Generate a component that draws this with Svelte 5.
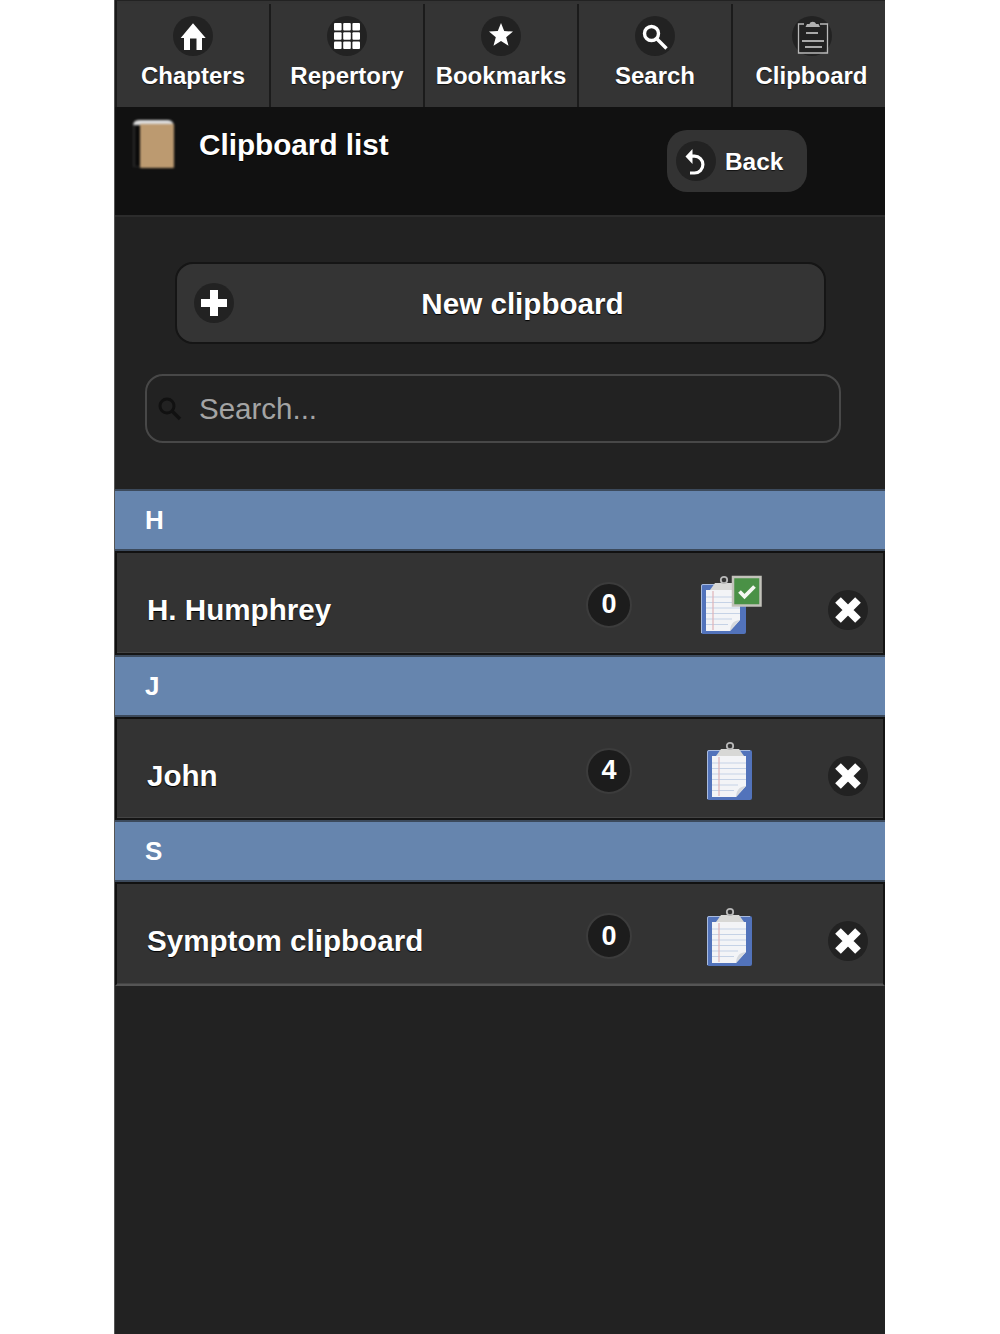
<script>
	const tabs = [
		{ label: "Chapters", icon: "home" },
		{ label: "Repertory", icon: "grid" },
		{ label: "Bookmarks", icon: "star" },
		{ label: "Search", icon: "search" },
		{ label: "Clipboard", icon: "clip" }
	];

	const groups = [
		{ letter: "H", name: "H. Humphrey", count: 0, checked: true },
		{ letter: "J", name: "John", count: 4, checked: false },
		{ letter: "S", name: "Symptom clipboard", count: 0, checked: false }
	];
</script>

{#snippet clipboard(checked)}
	<svg class="sheet" class:checked viewBox="0 0 60 60" width="60" height="60">
		<rect x="8" y="9" width="45" height="50" rx="2" fill="#5273bb" />
		<path d="M8.500 58V11q0-1.500 1.500-1.500h41" fill="none" stroke="#a9bbdd" stroke-width="1" />
		<path d="M13 15h34v30l-10 11H13z" fill="#f3f4f7" />
		<path d="M13 22h34M13 27.500h34M13 33h34M13 38.500h34M13 44h26M13 49.500h22" stroke="#c5d2e6" stroke-width="1" />
		<path d="M20 16v39" stroke="#dfb2b8" stroke-width="1.200" />
		<path d="M37 56c.5-6 2-10 10-11z" fill="#d6d9de" />
		<path d="M17 15l5-7h18l5 7z" fill="#d8d8d6" />
		<circle cx="31" cy="5" r="3.200" fill="none" stroke="#b8b8b8" stroke-width="1.800" />
		{#if checked}
			<rect x="40" y="2" width="27.500" height="28.500" fill="#4a9146" stroke="#c2c2ba" stroke-width="2.500" />
			<path d="M46.500 16.500l5 5 10-10" fill="none" stroke="#f4f8f2" stroke-width="3.800" />
		{/if}
	</svg>
{/snippet}

<div class="page">
	<nav class="tabs">
		{#each tabs as tab}
			<div class="tab">
				<span class="disc">
					<svg viewBox="0 0 40 40" width="40" height="40">
						{#if tab.icon == "home"}
							<path d="M20 7.300 7.700 22H11V34h6V22.500h6.500V34H29V22h3.700z" fill="#fff" />
						{:else if tab.icon == "grid"}
							{#each [7, 16.200, 25.400] as y}
								{#each [7, 16.200, 25.400] as x}
									<rect {x} {y} width="7.600" height="7.600" rx="1" fill="#fff" />
								{/each}
							{/each}
						{:else if tab.icon == "star"}
							<path d="M20 7l3.200 8 8.800.6-6.800 5.600 2.300 8.500-7.500-4.700-7.500 4.700 2.300-8.500-6.800-5.600 8.800-.6z" fill="#fff" />
						{:else if tab.icon == "search"}
							<circle cx="16.500" cy="17.500" r="7" fill="none" stroke="#fff" stroke-width="3.400" />
							<path d="M22 23l9.500 9.500" stroke="#fff" stroke-width="3.400" />
						{:else}
							<path d="M12 8H6.500v29h29V8H28" fill="none" stroke="#b8b8b8" stroke-width="1.300" />
							<path d="M13.500 11l1.500-3h2.500c.8-3 5.700-3 6.500 0h2.500l1.500 3z" fill="#b0b0b0" />
							<path d="M14 17h12M10 25h22M13 31h17" stroke="#a8a8a8" stroke-width="2" />
						{/if}
					</svg>
				</span>
				<span class="tab-label">{tab.label}</span>
			</div>
		{/each}
	</nav>

	<header class="head">
		<svg class="book" viewBox="0 0 46 52" width="46" height="52">
			<path d="M3 8q0-6 6-6h29q5 0 6 6v4H3z" fill="#dcdcdc" />
			<rect x="3" y="7" width="7" height="42" fill="#2a2a2a" />
			<rect x="5" y="8" width="5" height="40" fill="#0a0a0a" />
			<rect x="10" y="6" width="34" height="44" rx="1" fill="#bc9a70" />
		</svg>
		<h1>Clipboard list</h1>
		<button class="back">
			<span class="disc">
				<svg viewBox="0 0 40 40" width="40" height="40">
					<path d="M15 15.200h3.500a8.400 8.400 0 0 1 0 16.800H14" fill="none" stroke="#fff" stroke-width="3.200" />
					<path d="M9.500 15.500 16.500 8v15z" fill="#fff" />
				</svg>
			</span>
			Back
		</button>
	</header>

	<main class="tools">
		<button class="new">
			<span class="disc">
				<svg viewBox="0 0 40 40" width="40" height="40">
					<path d="M20 7v26M7 20h26" stroke="#fff" stroke-width="8" />
				</svg>
			</span>
			New clipboard
		</button>
		<div class="search">
			<svg viewBox="0 0 26 26" width="26" height="26">
				<circle cx="11" cy="10" r="7" fill="none" stroke="#111" stroke-width="3" />
				<path d="M16 15l8 8" stroke="#111" stroke-width="3.400" />
			</svg>
			<input placeholder="Search..." />
		</div>
	</main>

	{#each groups as group}
		<div class="letter">{group.letter}</div>
		<div class="row">
			<span class="name">{group.name}</span>
			<span class="count">{group.count}</span>
			<span class="pic">{@render clipboard(group.checked)}</span>
			<span class="disc close">
				<svg viewBox="0 0 40 40" width="40" height="40">
					<path d="M10 10l20 20M30 10 10 30" stroke="#fff" stroke-width="8" />
				</svg>
			</span>
		</div>
	{/each}
</div>

<style>
	:global(body) {
		background: #fff;
		font-family: "Liberation Sans", Arial, sans-serif;
	}

	.page {
		box-sizing: border-box;
		width: 771px;
		height: 1334px;
		margin-left: 114px;
		background: #222;
		border-left: 1px solid #555;
		overflow: hidden;
	}

	.tabs {
		display: flex;
		height: 107px;
		box-sizing: border-box;
		padding-top: 3px;
		background: #333;
		border-top: 1px solid #222;
		border-left: 2px solid #1b1b1b;
	}

	.tab {
		flex: 0 0 154px;
		display: flex;
		flex-direction: column;
		align-items: center;
		box-sizing: border-box;
		padding-top: 12px;
		border-right: 2px solid #1b1b1b;
		background: #343434;
	}

	.tab:last-child {
		flex: 1;
		padding-left: 5px;
		border-right: 0;
	}

	.tab-label {
		margin-top: 5px;
		color: #fff;
		font-size: 24px;
		font-weight: bold;
		line-height: 30px;
		white-space: nowrap;
		text-shadow: 0 1px 1px #111;
	}

	.disc {
		display: block;
		flex: none;
		width: 40px;
		height: 40px;
		border-radius: 50%;
		background: #222;
	}

	.disc svg {
		display: block;
	}

	.head {
		position: relative;
		display: flex;
		height: 110px;
		box-sizing: border-box;
		background: #111;
		border-bottom: 2px solid #2c2c2c;
	}

	.book {
		flex: none;
		margin: 11px 0 0 15px;
		filter: blur(0.8px);
	}

	h1 {
		margin: 20px 0 0 23px;
		color: #fff;
		font-size: 29.700px;
		font-weight: bold;
		line-height: 36px;
		text-shadow: 0 1px 1px #000;
	}

	button {
		font-family: inherit;
		font-weight: bold;
		color: #fff;
		cursor: pointer;
	}

	.back {
		display: flex;
		align-items: center;
		gap: 9px;
		position: absolute;
		left: 552px;
		top: 23px;
		box-sizing: border-box;
		width: 140px;
		height: 62px;
		padding: 2px 0 0 9px;
		border: 0;
		border-radius: 20px;
		background: #333;
		font-size: 24.400px;
		text-shadow: 0 1px 1px #111;
	}

	.back .disc {
		margin-top: -2px;
	}

	.tools {
		display: flex;
		flex-direction: column;
		height: 272px;
		box-sizing: border-box;
		padding: 45px 0 0 30px;
	}

	.new {
		position: relative;
		box-sizing: border-box;
		width: 651px;
		height: 82px;
		margin-left: 30px;
		padding: 2px 0 0 44px;
		border: 2px solid #151515;
		border-radius: 18px;
		background: #343434;
		font-size: 29.600px;
		text-shadow: 0 1px 1px #000;
	}

	.new .disc {
		position: absolute;
		left: 17px;
		top: 19px;
	}

	.search {
		display: flex;
		align-items: center;
		box-sizing: border-box;
		width: 696px;
		height: 69px;
		margin-top: 30px;
		padding-left: 9px;
		border: 2px solid #484848;
		border-radius: 18px;
		background: #222;
	}

	.search input {
		flex: 1;
		min-width: 0;
		margin-left: 17px;
		padding: 0;
		border: 0;
		outline: 0;
		background: transparent;
		color: #aaa;
		font-family: inherit;
		font-size: 29.500px;
	}

	.search input::placeholder {
		color: #a4a4a4;
		opacity: 1;
	}

	.letter {
		box-sizing: border-box;
		height: 62px;
		padding: 14px 0 0 30px;
		background: #6685ae;
		border-top: 2px solid #3c4a5c;
		border-bottom: 2px solid #3c4a5c;
		color: #fff;
		font-size: 26px;
		font-weight: bold;
		line-height: 30px;
	}

	.row {
		display: flex;
		align-items: center;
		box-sizing: border-box;
		height: 103.700px;
		padding: 14px 0 0 30px;
		background: #333;
		border: 2px solid #111;
		border-bottom-color: #151515;
		border-right-color: #151515;
		box-shadow: inset 0 -1px 0 #444;
	}

	.row:last-child {
		border-bottom-color: #555;
	}

	.name {
		flex: 1;
		color: #fff;
		font-size: 29.600px;
		font-weight: bold;
		text-shadow: 0 1px 1px #000;
	}

	.count {
		display: flex;
		align-items: center;
		justify-content: center;
		box-sizing: border-box;
		width: 46px;
		height: 46px;
		margin: -10px 0 0 0;
		border: 2px solid #3c3c3c;
		border-radius: 50%;
		background: #1c1c1c;
		color: #fff;
		font-size: 27px;
		font-weight: bold;
	}

	.pic {
		width: 60px;
		height: 60px;
		margin: -9px 69px 0 67px;
	}

	.sheet {
		display: block;
		overflow: visible;
		filter: blur(0.6px);
	}

	.sheet.checked {
		margin-left: -6px;
	}

	.close {
		margin: 0 15px 0 0;
	}
</style>
